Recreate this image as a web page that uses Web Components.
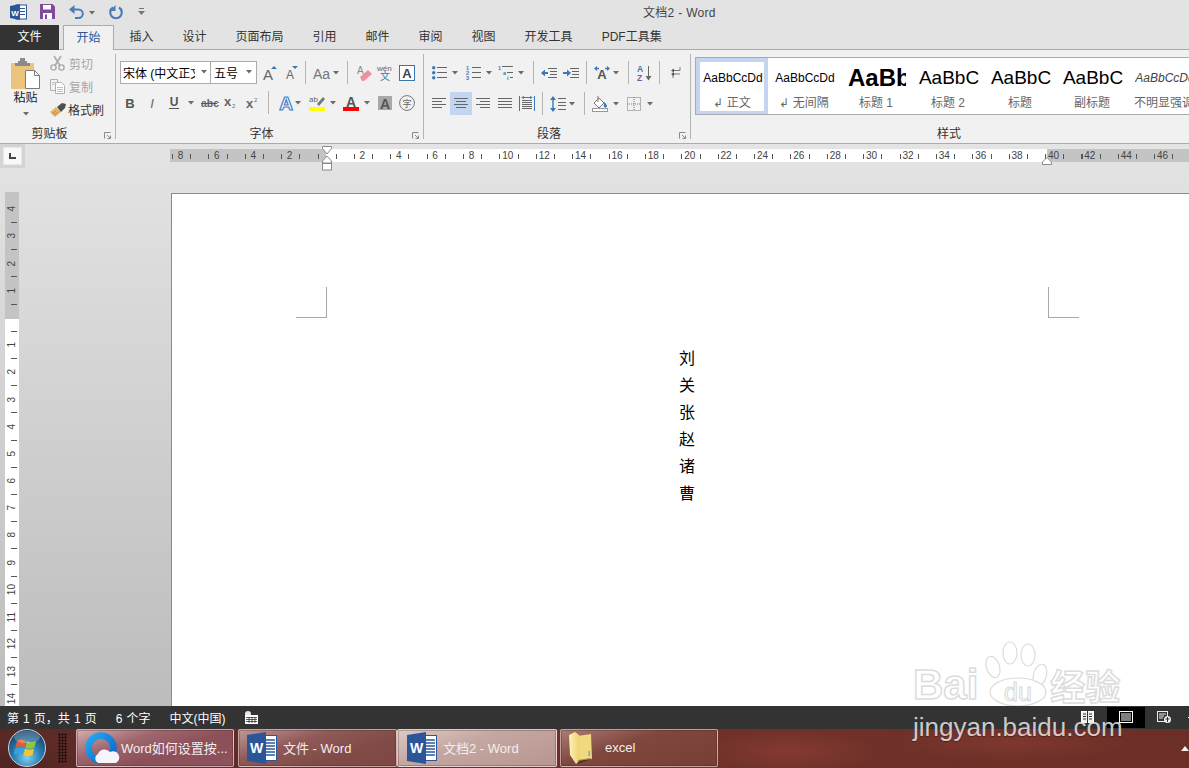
<!DOCTYPE html>
<html lang="zh">
<head>
<meta charset="utf-8">
<title>文档2 - Word</title>
<style>
  html, body { margin: 0; padding: 0; overflow: hidden; background: #fff; }
</style>
</head>
<body>
<word-app></word-app>
<script>
const FONT = "'Liberation Sans','Noto Sans CJK SC',sans-serif";
const T = (x, y, size, fill, str, extra = '') =>
  `<text x="${x}" y="${y}" font-size="${size}" fill="${fill}" font-family="Liberation Sans,Noto Sans CJK SC,sans-serif" ${extra}>${str}</text>`;
const L = (rows, c = '#666') => rows.map(([a, y, b]) => `<path d="M${a} ${y}.5H${b}" stroke="${c}" fill="none"/>`).join('');

// name: [width, height, svg body]
const ICONS = {
  arrow: [6, 4, '<path d="M0 0h6L3 3.5z" fill="#6a6a6a"/>'],
  div: [1, 23, '<path d="M.5 0v23" stroke="#b4b4b4"/>'],
  wordSmall: [17, 16, '<rect x="6" y="1" width="10.5" height="14" fill="#fff" stroke="#2b579a"/><path d="M9 4.500h6M9 7.500h6M9 10.500h6" stroke="#2b579a"/><path d="M0 2l10-2v16l-10-2z" fill="#2b579a"/>' + T(5, 11.5, 8, '#fff', 'W', 'font-weight="bold" text-anchor="middle"')],
  save: [15, 15, '<path d="M0 0h12.500L15 2.500V15H0z" fill="#7e4b9e"/><rect x="3" y="1" width="8" height="4.500" fill="#fff"/><rect x="3" y="9" width="9" height="6" fill="#fff"/><rect x="5" y="10.500" width="2" height="4.500" fill="#7e4b9e"/>'],
  undo: [16, 14, '<path d="M3 4.500h6.500a4.200 4.200 0 0 1 0 8.500H6" fill="none" stroke="#4a7db8" stroke-width="2"/><path d="M5.500 0v9L0 4.500z" fill="#4a7db8"/>'],
  redo: [14, 14, '<path d="M4 2.500a5.800 5.800 0 1 0 6 0" fill="none" stroke="#4a7db8" stroke-width="2.200"/><path d="M6.500 0v6H1z" fill="#4a7db8"/>'],
  custom: [7, 7, '<path d="M1 .5h5" stroke="#777"/><path d="M0 3h7L3.500 7z" fill="#777"/>'],
  paste: [30, 31, '<rect x="0" y="5" width="23" height="26" rx="1" fill="#ebc47f"/><path d="M4 5h15v3H4z" fill="#8a8a8a"/><path d="M7 3h9v3H7z" fill="#8a8a8a"/><path d="M9 0h5v3H9z" fill="#8a8a8a"/><path d="M14.500 12.500h9l5 5v13h-14z" fill="#fff" stroke="#7a7a7a"/><path d="M23.500 12.500v5h5" fill="none" stroke="#7a7a7a"/>'],
  cut: [15, 15, '<circle cx="3.500" cy="11.500" r="2.600" fill="none" stroke="#aaa" stroke-width="1.400"/><circle cx="11.500" cy="11.500" r="2.600" fill="none" stroke="#aaa" stroke-width="1.400"/><path d="M5 9.500L11 0M10 9.500L4 0" stroke="#aaa" stroke-width="1.600"/>'],
  copy: [15, 15, '<path d="M.5.5h7v11h-7z" fill="#f3f3f3" stroke="#b0b0b0"/><path d="M5.500 3.500h6l3 3v8h-9z" fill="#fff" stroke="#b0b0b0"/><path d="M7 8.500h6M7 10.500h6M7 12.500h6M2 3.500h3M2 5.500h2" stroke="#c0c0c0"/>'],
  brush: [17, 15, '<path d="M0 10l6-5 5 5-6 5z" fill="#e4b468"/><path d="M2 12l4-3M4 13l4-3" stroke="#b98c44"/><path d="M7 5l5-4 4 1-1 4-4 4z" fill="#4e4e4e"/>'],
  launcher: [7, 7, '<path d="M.5 6.500v-6h6" fill="none" stroke="#8a8a8a"/><path d="M3 3l3 3M6.500 3.500v3h-3" fill="none" stroke="#8a8a8a"/>'],
  grow: [14, 14, T(0, 14, 15, '#666', 'A') + '<path d="M8 3l3-3 3 3z" fill="#3b78b5"/>'],
  shrink: [12, 13, T(0, 13, 12, '#666', 'A') + '<path d="M6 0h6L9 3z" fill="#3b78b5"/>'],
  aa: [18, 14, T(0, 13, 14, '#777', 'Aa')],
  eraser: [15, 16, T(0, 9, 10, '#888', 'A') + '<path d="M3 12l8-7 4 4-8 7H5z" fill="#ee8f9f"/>'],
  wen: [16, 17, T(0, 7, 8, '#666', 'wén') + T(3, 16, 10, '#3b78b5', '文')],
  boxA: [16, 16, '<rect x=".5" y=".5" width="15" height="15" fill="#fff" stroke="#3c74ad"/>' + T(8, 13, 13, '#444', 'A', 'text-anchor="middle" font-weight="bold"')],
  bold: [10, 11, T(5, 10.5, 13, '#555', 'B', 'text-anchor="middle" font-weight="bold"')],
  italic: [10, 11, T(5, 10.5, 13, '#666', 'I', 'text-anchor="middle" font-style="italic"')],
  under: [10, 13, T(5, 10, 12, '#555', 'U', 'text-anchor="middle" font-weight="bold"') + '<path d="M0 12.500h10" stroke="#555"/>'],
  abc: [16, 10, T(0, 9, 10.5, '#666', 'abc', 'font-weight="bold"') + '<path d="M0 5.500h16" stroke="#555"/>'],
  sub: [13, 13, T(0, 10, 13, '#666', 'x', 'font-weight="bold"') + T(8, 12, 6, '#3b78b5', '2')],
  sup: [13, 13, T(0, 12, 13, '#666', 'x', 'font-weight="bold"') + T(8, 6, 6, '#3b78b5', '2')],
  effectA: [18, 16, T(9, 15, 19, '#fff', 'A', 'text-anchor="middle" font-weight="bold" stroke="#3f7fc8" stroke-width="1.200"')],
  hilite: [16, 16, T(0, 7, 8, '#666', 'ab') + '<path d="M8 9l6-7 2 2-6 7z" fill="#777"/><rect y="12" width="16" height="4" fill="#ff0"/>'],
  colorA: [16, 16, T(8, 11.5, 14, '#555', 'A', 'text-anchor="middle" font-weight="bold"') + '<rect y="12" width="16" height="4" fill="#f00"/>'],
  shadeA: [14, 14, '<rect width="14" height="14" fill="#a8a8a8"/>' + T(7, 12.5, 14, '#555', 'A', 'text-anchor="middle" font-weight="bold"')],
  circle: [16, 16, '<circle cx="8" cy="8" r="7.400" fill="none" stroke="#777"/>' + T(8, 12, 9, '#666', '字', 'text-anchor="middle"')],
  bullets: [15, 14, '<path d="M5 1.500h10M5 6.500h10M5 11.500h10" stroke="#666"/><circle cx="1.700" cy="1.700" r="1.700" fill="#3b78b5"/><circle cx="1.700" cy="6.700" r="1.700" fill="#3b78b5"/><circle cx="1.700" cy="11.700" r="1.700" fill="#3b78b5"/>'],
  numbers: [15, 15, T(0, 4.5, 5.5, '#3b78b5', '1', 'font-weight="bold"') + T(0, 9.7, 5.5, '#3b78b5', '2', 'font-weight="bold"') + T(0, 15, 5.5, '#3b78b5', '3', 'font-weight="bold"') + '<path d="M6 2.500h9M6 7.500h9M6 12.500h9" stroke="#666"/>'],
  multi: [16, 15, T(0, 5, 5.5, '#3b78b5', '1', 'font-weight="bold"') + T(5, 10, 5.5, '#3b78b5', 'a', 'font-weight="bold"') + T(9, 15, 5.5, '#3b78b5', 'i', 'font-weight="bold"') + '<path d="M4 1.500h11M9 7.500h6M12 12.500h3" stroke="#666"/>'],
  dec: [16, 10, '<path d="M7 .5h9M9 3.500h7M9 6.500h7M7 9.500h9" stroke="#666"/><path d="M1 5h6" stroke="#3b78b5" stroke-width="2"/><path d="M4 1.500v7L0 5z" fill="#3b78b5"/>'],
  inc: [16, 10, '<path d="M7 .5h9M9 3.500h7M9 6.500h7M7 9.500h9" stroke="#666"/><path d="M0 5h6" stroke="#3b78b5" stroke-width="2"/><path d="M4 1.500v7L8 5z" fill="#3b78b5"/>'],
  dirA: [16, 13, T(8, 13, 13, '#555', 'A', 'text-anchor="middle" font-weight="bold"') + '<path d="M2 2.500h3M11 2.500h3" stroke="#3b78b5" stroke-width="1.400"/><path d="M3 0v5L0 2.500zM13 0v5l3-2.500z" fill="#3b78b5"/>'],
  sort: [15, 16, T(0, 7, 8.5, '#3b78b5', 'A', 'font-weight="bold"') + T(0, 15.5, 8.5, '#8e4fa8', 'Z', 'font-weight="bold"') + '<path d="M11.500 1v12" stroke="#666"/><path d="M8.500 11h6l-3 4.500z" fill="#666"/>'],
  para: [11, 13, '<path d="M10 1v3.500H3M10 8H3v4" fill="none" stroke="#777"/><path d="M4 2.500v4L1 4.500zM1 8l3-2v4z" fill="#555"/>'],
  aleft: [14, 11, L([[0, 0, 14], [0, 3, 10], [0, 6, 14], [0, 9, 10]])],
  aright: [14, 11, L([[0, 0, 14], [4, 3, 14], [0, 6, 14], [4, 9, 14]])],
  ajust: [14, 11, L([[0, 0, 14], [0, 3, 14], [0, 6, 14], [0, 9, 14]])],
  acenterOn: [22, 23, '<rect width="22" height="23" fill="#c3d5f1"/>' + L([[4, 6, 18], [6, 9, 16], [4, 12, 18], [6, 15, 16]])],
  adist: [16, 15, '<path d="M.5 0v15M15.500 0v15" stroke="#3b78b5"/><path d="M3 1.500h10" stroke="#3b78b5"/><path d="M5 0v3L2 1.500zM11 0v3l3-1.500z" fill="#3b78b5"/>' + L([[3, 4, 13], [3, 6, 13], [3, 8, 13], [3, 10, 13], [3, 12, 13]])],
  lines: [16, 16, '<path d="M3 2v12" stroke="#3b78b5" stroke-width="1.400"/><path d="M0 4l3-4 3 4zM0 12l3 4 3-4z" fill="#3b78b5"/>' + L([[8, 2, 16], [8, 6, 16], [8, 9, 16], [8, 13, 16]])],
  bucket: [16, 16, '<path d="M2 7l5-5 5 5-5 5z" fill="#fff" stroke="#777"/><path d="M6 0v6" stroke="#777"/><path d="M12 6c2 2 3 3 3 4a1.600 1.600 0 0 1-3.200 0z" fill="#3b78b5"/><rect x=".5" y="12.500" width="15" height="3" fill="#fff" stroke="#999"/>'],
  borders: [14, 14, '<rect x=".5" y=".5" width="13" height="13" fill="none" stroke="#777" stroke-dasharray="1 1"/><path d="M7 0v14M0 7h14" stroke="#777" stroke-dasharray="1 1"/>'],
  macro: [13, 13, '<circle cx="3" cy="3" r="3" fill="#e8e8e8"/><rect y="4" width="13" height="9" fill="#fff"/><path d="M1 6.500h11M1 8.500h11M1 10.500h11M4 6v6M7 6v6M10 6v6" stroke="#333" stroke-width=".8"/>'],
  read: [13, 12, '<rect x=".5" y=".5" width="12" height="11" fill="#eee" stroke="#fff"/><path d="M6.500 0v12" stroke="#333"/><path d="M2 3h3M8 3h3M2 5.500h3M8 5.500h3M2 8h3M8 8h3" stroke="#333"/>'],
  print: [14, 12, '<rect x=".5" y=".5" width="13" height="11" fill="none" stroke="#fff"/><path d="M2 3h10M2 5h10M2 7h10M2 9h10" stroke="#fff"/>'],
  web: [14, 12, '<rect x=".5" y=".5" width="10" height="10" fill="#333" stroke="#eee"/><path d="M2 3h7M2 5h5M2 7h4" stroke="#eee"/><circle cx="10.500" cy="8.500" r="3.500" fill="#eee"/><path d="M8.500 8h4M10.500 6v5" stroke="#333"/>'],
  qq: [32, 32, '<defs><linearGradient id="q" x1="0" y1="0" x2="1" y2="1"><stop offset="0" stop-color="#25a8f0"/><stop offset="1" stop-color="#0b62c4"/></linearGradient></defs><circle cx="16" cy="16" r="12.500" fill="none" stroke="url(#q)" stroke-width="6.500"/><path d="M13 31a5 5 0 0 1 0-9 7 7 0 0 1 12-2 5.500 5.500 0 0 1 6 11z" fill="#f4f6fa"/>'],
  wordBig: [30, 32, '<rect x="13" y="3.500" width="16.500" height="25" fill="#fff" stroke="#2b579a"/><path d="M18 8h10M18 11h10M18 14h10M18 17h10M18 20h10M18 23h10" stroke="#2b579a" stroke-width="1.300"/><path d="M0 3l19-3v32L0 29z" fill="#2b579a"/>' + T(9.5, 21, 14, '#fff', 'W', 'font-weight="bold" text-anchor="middle"')],
  folder: [24, 32, '<defs><linearGradient id="f" x1="0" y1="0" x2="1" y2="0"><stop offset="0" stop-color="#fdf3b4"/><stop offset="1" stop-color="#eed06a"/></linearGradient></defs><path d="M8 4l14-2 1 25-14 2z" fill="#f0d97f"/><path d="M0 3l6-3 4 3 1 26-4 3-6-9z" fill="url(#f)"/><rect x="19.500" y="19" width="1.500" height="5" fill="#6aa8d8"/><path d="M8 32l15-5-2-1-12 2z" fill="rgba(0,0,0,.35)"/>'],
  orb: [38, 38, '<defs><radialGradient id="o" cx=".5" cy=".75" r=".8"><stop offset="0" stop-color="#7fd0f0"/><stop offset=".45" stop-color="#2a7fb4"/><stop offset="1" stop-color="#0f2f55"/></radialGradient></defs><circle cx="19" cy="19" r="18.500" fill="url(#o)" stroke="#c8d6de"/><path d="M9 12q4-3 9 0l-1.500 6.500q-4.500-2.500-9 0z" fill="#ea5a30"/><path d="M19 12q4 2.500 9 0l-1.500 6.500q-5 2.500-9 0z" fill="#8cc63f"/><path d="M7 19.500q4.500-2.500 9 0L14.500 26q-4.500-2.500-9 0z" fill="#36a3e0"/><path d="M17 19.500q4.500 2.500 9 0L24.500 26q-5 2.500-9 0z" fill="#f7c530"/><ellipse cx="19" cy="8" rx="13" ry="6.500" fill="rgba(255,255,255,.22)"/>']
};

class WordIcon extends HTMLElement {
  connectedCallback() {
    const [w, h, body] = ICONS[this.getAttribute('name')];
    this.attachShadow({ mode: 'open' });
    this.shadowRoot.innerHTML = `
      <style>:host { display: block; flex: none; width: ${w}px; height: ${h}px; line-height: 0; } svg { overflow: visible; }</style>
      <svg width="${w}" height="${h}" viewBox="0 0 ${w} ${h}">${body}</svg>`;
  }
}
customElements.define('word-icon', WordIcon);

// items: "name:margin name:margin", laid out left to right after any slotted content
class RbRow extends HTMLElement {
  connectedCallback() {
    const items = (this.getAttribute('items') || '').split(/\s+/).filter(Boolean).map(s => {
      const [n, m] = s.split(':');
      return `<word-icon name="${n}" style="margin-left:${m || 0}px"></word-icon>`;
    }).join('');
    this.attachShadow({ mode: 'open' });
    this.shadowRoot.innerHTML = `
      <style>:host { display: flex; align-items: center; height: 23px; }</style>
      <slot></slot>${items}`;
  }
}
customElements.define('rb-row', RbRow);

class RbGroup extends HTMLElement {
  connectedCallback() {
    const launcher = this.hasAttribute('launcher') ? '<word-icon class="launch" name="launcher"></word-icon>' : '';
    this.attachShadow({ mode: 'open' });
    this.shadowRoot.innerHTML = `
      <style>
        :host { display: flex; flex-direction: column; flex: none; box-sizing: border-box; height: 85px; margin-top: 4px; border-right: 1px solid #b4b4b4; position: relative; }
        .body { flex: 1; min-height: 0; }
        .foot { height: 17px; line-height: 17px; margin-bottom: -4px; text-align: center; font-size: 12px; color: #333; padding-right: var(--foot-right, 16px); padding-left: var(--foot-left, 0); }
        .launch { position: absolute; right: 4px; bottom: 0; }
      </style>
      <div class="body"><slot></slot></div>
      <div class="foot">${this.getAttribute('label')}</div>
      ${launcher}`;
  }
}
customElements.define('rb-group', RbGroup);

class RbStyle extends HTMLElement {
  connectedCallback() {
    this.attachShadow({ mode: 'open' });
    this.shadowRoot.innerHTML = `
      <style>
        :host { display: flex; flex-direction: column; align-items: center; flex: none; width: 72px; height: 57px; overflow: hidden; }
        :host([selected]) { box-shadow: inset 0 0 0 4px #c3d5f1; }
        .pv { display: flex; align-items: center; justify-content: center; box-sizing: border-box; width: 60px; height: 38px; padding-top: 2px; margin-left: 2px; overflow: hidden; white-space: nowrap; color: #000; }
        .cap { font-size: 12px; line-height: 15px; color: #666; white-space: nowrap; }
      </style>
      <div class="pv"><slot></slot></div>
      <div class="cap">${this.getAttribute('label')}</div>`;
  }
}
customElements.define('rb-style', RbStyle);

class WordTitlebar extends HTMLElement {
  connectedCallback() {
    this.attachShadow({ mode: 'open' });
    this.shadowRoot.innerHTML = `
      <style>
        :host { display: flex; align-items: center; height: 25px; box-sizing: border-box; padding: 0 0 2px 10px; background: #e3e3e3; }
        .title { margin-left: 498px; margin-bottom: 1px; font-size: 12px; color: #444; white-space: nowrap; letter-spacing: .3px; }
      </style>
      <word-icon name="wordSmall"></word-icon>
      <word-icon name="save" style="margin-left:13px"></word-icon>
      <word-icon name="undo" style="margin-left:14px"></word-icon>
      <word-icon name="arrow" style="margin-left:4px"></word-icon>
      <word-icon name="redo" style="margin-left:14px"></word-icon>
      <word-icon name="custom" style="margin-left:15px"></word-icon>
      <div class="title">文档2 - Word</div>`;
  }
}
customElements.define('word-titlebar', WordTitlebar);

class WordTabs extends HTMLElement {
  connectedCallback() {
    const names = ['插入', '设计', '页面布局', '引用', '邮件', '审阅', '视图', '开发工具', 'PDF工具集'];
    this.attachShadow({ mode: 'open' });
    this.shadowRoot.innerHTML = `
      <style>
        :host { display: flex; height: 25px; background: #e3e3e3; box-sizing: border-box; border-bottom: 1px solid #ababab; font-size: 12px; color: #333; }
        .file { width: 59px; height: 25px; line-height: 24px; text-align: center; background: #333; color: #fff; }
        .home { box-sizing: border-box; width: 51px; height: 25px; margin-left: 4px; line-height: 24px; text-align: center; background: #f1f1f1; border: 1px solid #ababab; border-bottom: 0; color: #2b579a; }
        .list { display: flex; gap: 29px; margin-left: 15.500px; line-height: 24px; white-space: nowrap; }
      </style>
      <div class="file">文件</div>
      <div class="home">开始</div>
      <div class="list">${names.map(n => `<span>${n}</span>`).join('')}</div>`;
  }
}
customElements.define('word-tabs', WordTabs);

class WordRibbon extends HTMLElement {
  connectedCallback() {
    this.attachShadow({ mode: 'open' });
    this.shadowRoot.innerHTML = `
      <style>
        :host { display: flex; height: 94px; box-sizing: border-box; background: #f1f1f1; border-bottom: 1px solid #ababab; font-size: 12px; color: #333; overflow: hidden; }
        .clip { display: flex; }
        .paste { display: flex; flex-direction: column; align-items: center; width: 51px; padding-top: 4px; }
        .paste span { line-height: 17px; color: #222; margin-top: 1px; }
        .paste .a { margin-top: 5px; }
        .small { margin-top: -2.500px; margin-left: -1px; }
        .small span { margin-left: 4px; white-space: nowrap; color: #a6a6a6; }
        .small .on { color: #333; }
        .r1 { margin: 7px 0 0 4px; }
        .r2 { margin: 7px 0 0 4px; }
        .p1 { margin-top: 7px; }
        .p2 { margin-top: 8px; }
        .sel { display: flex; align-items: center; box-sizing: border-box; height: 23px; padding-bottom: 1px; background: #fff; border: 1px solid #ababab; color: #000; white-space: nowrap; overflow: hidden; }
        .sel b { font-weight: normal; overflow: hidden; }
        .sel word-icon { margin-left: auto; }
        .font { width: 91px; padding: 0 3px 1px 2px; }
        .font b { width: 72px; }
        .size { width: 47px; margin-left: -1px; padding: 0 4px 1px 3px; }
        .gallery { display: flex; margin: 3px 0 0 4px; height: 58px; box-sizing: border-box; background: #fff; border: 1px solid #ababab; border-right: 0; overflow: hidden; }
        .styles { flex: 1; border-right: 0; min-width: 0; --foot-right: 0; --foot-left: 18px; }
        .aa { font: 12px 'Liberation Sans', sans-serif; }
        .h2 { font: 19px 'Liberation Sans', sans-serif; }
      </style>
      <rb-group label="剪贴板" launcher style="width:116px">
        <div class="clip">
          <div class="paste">
            <word-icon name="paste"></word-icon>
            <span>粘贴</span>
            <word-icon class="a" name="arrow"></word-icon>
          </div>
          <div class="small">
            <rb-row items=""><word-icon name="cut"></word-icon><span>剪切</span></rb-row>
            <rb-row items=""><word-icon name="copy"></word-icon><span>复制</span></rb-row>
            <rb-row items=""><word-icon name="brush"></word-icon><span class="on" style="margin-left:1px">格式刷</span></rb-row>
          </div>
        </div>
      </rb-group>
      <rb-group label="字体" launcher style="width:308px">
        <rb-row class="r1" items="grow:6 shrink:9 div:7 aa:7 arrow:2 div:8 eraser:9 wen:5 boxA:6">
          <div class="sel font"><b>宋体 (中文正文)</b><word-icon name="arrow"></word-icon></div>
          <div class="sel size"><b>五号</b><word-icon name="arrow"></word-icon></div>
        </rb-row>
        <rb-row class="r2" items="bold:5 italic:12 under:12 arrow:9 abc:7 sub:7 sup:9 div:9 effectA:8 arrow:0 hilite:8 arrow:5 colorA:7 arrow:5 shadeA:8 circle:7"></rb-row>
      </rb-group>
      <rb-group label="段落" launcher style="width:267px">
        <rb-row class="p1" items="bullets:8 arrow:5 numbers:8 arrow:5 multi:6 arrow:4 div:9 dec:7 inc:6 div:7 dirA:7 arrow:3 div:9 sort:8 div:7 para:10"></rb-row>
        <rb-row class="p2" items="aleft:8 acenterOn:4 aright:4 ajust:8 adist:7 div:7 lines:7 arrow:3 div:9 bucket:7 arrow:5 borders:8 arrow:6"></rb-row>
      </rb-group>
      <rb-group class="styles" label="样式">
        <div class="gallery">
          <rb-style label="↲ 正文" selected><span class="aa">AaBbCcDd</span></rb-style>
          <rb-style label="↲ 无间隔"><span class="aa">AaBbCcDd</span></rb-style>
          <rb-style label="标题 1"><span style="font:bold 24px 'Liberation Sans',sans-serif;display:block;width:58px;overflow:hidden">AaBbC</span></rb-style>
          <rb-style label="标题 2"><span class="h2">AaBbC</span></rb-style>
          <rb-style label="标题"><span class="h2">AaBbC</span></rb-style>
          <rb-style label="副标题"><span class="h2">AaBbC</span></rb-style>
          <rb-style label="不明显强调"><span style="font:italic 12px 'Liberation Sans',sans-serif;color:#444">AaBbCcDd</span></rb-style>
        </div>
      </rb-group>`;
  }
}
customElements.define('word-ribbon', WordRibbon);

class HRuler extends HTMLElement {
  connectedCallback() {
    const nums = [8, 6, 4, 2, ''];
    for (let i = 2; i <= 48; i += 2) nums.push(i);
    this.attachShadow({ mode: 'open' });
    this.shadowRoot.innerHTML = `
      <style>
        :host { display: flex; flex: 1; min-width: 0; height: 13px; position: relative; font: 10px/13px 'Liberation Sans', sans-serif; color: #444;
          background:
            repeating-linear-gradient(90deg, #555 0 1px, transparent 1px 18.190px) 2px 5px / 100% 5px no-repeat,
            linear-gradient(90deg, #c4c4c4 156px, #fff 156px, #fff 877px, #c4c4c4 877px); }
        .strip { display: flex; flex: 1; min-width: 0; overflow: hidden; }
        span { flex: none; width: 36.380px; text-align: center; }
        span:first-child { margin-left: -7.700px; }
        .indent { position: absolute; left: 152px; top: -3px; }
        .right { position: absolute; left: 872px; top: 8px; }
      </style>
      <div class="strip">${nums.map(n => `<span>${n}</span>`).join('')}</div>
      <svg class="indent" width="10" height="25" viewBox="0 0 10 25">
        <path d="M.5.5h9v2L5 8 .5 2.500z" fill="#fff" stroke="#8a8a8a"/>
        <path d="M5 10l4.500 5v2h-9v-2z" fill="#fff" stroke="#8a8a8a"/>
        <rect x=".5" y="17.500" width="9" height="6.500" fill="#fff" stroke="#8a8a8a"/>
      </svg>
      <svg class="right" width="10" height="8" viewBox="0 0 10 8"><path d="M5 .5l4.500 4.500v2.500h-9V5z" fill="#fff" stroke="#8a8a8a"/></svg>`;
  }
}
customElements.define('h-ruler', HRuler);

class VRuler extends HTMLElement {
  connectedCallback() {
    const nums = [4, 3, 2, 1, ''];
    for (let i = 1; i <= 14; i++) nums.push(i);
    this.attachShadow({ mode: 'open' });
    this.shadowRoot.innerHTML = `
      <style>
        :host { display: flex; flex-direction: column; flex: none; width: 14px; margin-left: 5px; overflow: hidden; font: 10px/14px 'Liberation Sans', sans-serif; color: #444;
          background:
            repeating-linear-gradient(180deg, #555 0 1px, transparent 1px 27.200px) 6px 30px / 6px 100% no-repeat,
            linear-gradient(180deg, #c4c4c4 127px, #fff 127px); }
        span { flex: none; height: 27.200px; display: flex; align-items: center; justify-content: center; }
        span:first-of-type { margin-top: 3.400px; }
        b { font-weight: normal; writing-mode: vertical-rl; transform: rotate(180deg); }
      </style>
      ${nums.map(n => `<span><b>${n}</b></span>`).join('')}`;
  }
}
customElements.define('v-ruler', VRuler);

class WordPage extends HTMLElement {
  connectedCallback() {
    this.attachShadow({ mode: 'open' });
    this.shadowRoot.innerHTML = `
      <style>
        :host { display: block; flex: 1; min-width: 0; margin: 1px 0 0 152px; box-sizing: border-box; background: #fff; border: solid #8a8a8a; border-width: 1px 0 0 1px; padding: 93px 0 0 124px; overflow: hidden; }
        .crops { display: flex; justify-content: space-between; width: 783px; }
        .crops i { display: block; box-sizing: border-box; width: 31px; height: 31px; border-bottom: 1px solid #a8a8a8; }
        .crops i:first-child { border-right: 1px solid #a8a8a8; }
        .crops i:last-child { border-left: 1px solid #a8a8a8; }
        .text { width: 722px; margin: 27px 0 0 30px; text-align: center; font-size: 16px; line-height: 27.100px; color: #000; }
      </style>
      <div class="crops"><i></i><i></i></div>
      <div class="text"><div>刘</div><div>关</div><div>张</div><div>赵</div><div>诸</div><div>曹</div></div>`;
  }
}
customElements.define('word-page', WordPage);

class WordWorkspace extends HTMLElement {
  connectedCallback() {
    this.attachShadow({ mode: 'open' });
    this.shadowRoot.innerHTML = `
      <style>
        :host { display: flex; flex-direction: column; height: 562px; background: linear-gradient(180deg, #e4e4e4 0, #d6d6d6 200px, #bcbcbc 100%); }
        .top { display: flex; height: 48px; flex: none; }
        .tabsel { flex: none; box-sizing: border-box; width: 25px; height: 24px; padding: 3px; background: #d4d4d4; }
        .tabsel div { box-sizing: border-box; height: 18px; background: #f8f8f8; border: 1px solid #e8e8e8; display: flex; align-items: center; justify-content: center; }
        .tabsel svg { display: block; }
        h-ruler { margin: 5px 0 0 145px; }
        .main { display: flex; flex: 1; min-height: 0; }
      </style>
      <div class="top">
        <div class="tabsel"><div><svg width="7" height="6" viewBox="0 0 7 6"><path d="M1 0v5h6" fill="none" stroke="#444" stroke-width="2"/></svg></div></div>
        <h-ruler></h-ruler>
      </div>
      <div class="main">
        <v-ruler></v-ruler>
        <word-page></word-page>
      </div>`;
  }
}
customElements.define('word-workspace', WordWorkspace);

class WordStatusbar extends HTMLElement {
  connectedCallback() {
    this.attachShadow({ mode: 'open' });
    this.shadowRoot.innerHTML = `
      <style>
        :host { display: flex; align-items: center; height: 23px; box-sizing: border-box; padding: 0 0 1px 7px; background: #333; color: #fff; font-size: 12px; white-space: nowrap; word-spacing: .75px; }
        .view { flex: none; display: flex; align-items: center; justify-content: center; width: 38px; height: 21px; margin-left: 13px; background: #000; }
        .dash { width: 1px; height: 1px; background: #fff; margin-left: 17px; }
        .push { margin-left: auto; }
      </style>
      <span>第 1 页，共 1 页</span>
      <span style="margin-left:19px">6 个字</span>
      <span style="margin-left:19px">中文(中国)</span>
      <word-icon name="macro" style="margin-left:20px"></word-icon>
      <word-icon class="push" name="read"></word-icon>
      <div class="view"><word-icon name="print"></word-icon></div>
      <word-icon name="web" style="margin-left:12px"></word-icon>
      <div class="dash"></div>`;
  }
}
customElements.define('word-statusbar', WordStatusbar);

class TbButton extends HTMLElement {
  connectedCallback() {
    this.attachShadow({ mode: 'open' });
    this.shadowRoot.innerHTML = `
      <style>
        :host { display: flex; align-items: center; flex: none; box-sizing: border-box; height: 38px; border: 1px solid rgba(255,235,235,.55); border-radius: 2px; box-shadow: inset 0 0 0 1px rgba(60,20,20,.25); color: #f4eeee; font: 13px 'Liberation Sans','Noto Sans CJK SC',sans-serif; white-space: nowrap; overflow: hidden; }
        .ic { flex: none; width: 36px; display: flex; align-items: center; }
        .tx { padding-bottom: 2px; }
      </style>
      <div class="ic"><slot name="icon"></slot></div><div class="tx"><slot></slot></div>`;
  }
}
customElements.define('tb-button', TbButton);

class WinTaskbar extends HTMLElement {
  connectedCallback() {
    this.attachShadow({ mode: 'open' });
    this.shadowRoot.innerHTML = `
      <style>
        :host { display: flex; flex: 1; min-height: 0; box-sizing: border-box; padding-left: 8px; overflow: hidden;
          background:
            radial-gradient(ellipse 90px 22px at 790px 22px, #843a30, transparent),
            radial-gradient(ellipse 120px 18px at 1010px 14px, #7f382e, transparent),
            radial-gradient(ellipse 100px 26px at 40px 10px, #5f2b28, transparent),
            linear-gradient(90deg, #4f2422 0, #5a2a26 76px, #6f3129 700px, #6c2f28 100%); }
        .orb { flex: none; }
        .grip { flex: none; width: 9px; height: 30px; margin: 4px 9px 0 12px; background: radial-gradient(circle, #2b1311 1px, transparent 1.300px) 0 0 / 3px 3px; }
        .b1 { width: 158px; padding-left: 8px; background: linear-gradient(162deg, #cfaeb0 0, #a0666e 32%, #8b5059 60%, #8d525b 100%); }
        .b2 { width: 159px; margin-left: 4px; padding-left: 8px; background: linear-gradient(162deg, #bf9896 0, #905a59 35%, #814b47 65%, #7e4744 100%); }
        .b3 { width: 160px; padding-left: 9px; background: linear-gradient(162deg, #dccbc7 0, #c4a7a1 40%, #b8968f 100%); }
        .b4 { width: 158px; margin-left: 3px; padding-left: 8px; background: linear-gradient(162deg, #ad7b76 0, #7f473e 40%, #763e34 100%); }
        .tray { margin: 17px 0 0 auto; width: 0; height: 0; border: 4px solid transparent; border-top: 0; border-bottom: 5px solid #f0f0f0; }
      </style>
      <word-icon class="orb" name="orb"></word-icon>
      <div class="grip"></div>
      <tb-button class="b1"><word-icon slot="icon" name="qq"></word-icon>Word如何设置按...</tb-button>
      <tb-button class="b2"><word-icon slot="icon" name="wordBig"></word-icon>文件 - Word</tb-button>
      <tb-button class="b3"><word-icon slot="icon" name="wordBig"></word-icon>文档2 - Word</tb-button>
      <tb-button class="b4"><word-icon slot="icon" name="folder"></word-icon>excel</tb-button>
      <div class="tray"></div>`;
  }
}
customElements.define('win-taskbar', WinTaskbar);

class BaiduWatermark extends HTMLElement {
  connectedCallback() {
    this.attachShadow({ mode: 'open' });
    this.shadowRoot.innerHTML = `
      <style>
        :host { position: absolute; left: 913px; top: 640px; width: 220px; pointer-events: none; display: flex; flex-direction: column; }
        .top { display: flex; align-items: flex-end; height: 66px; color: rgba(255,255,255,.9); -webkit-text-stroke: 1.500px #dcdcdc; }
        .bai { font: bold 42px/42px 'Liberation Sans', sans-serif; }
        svg { flex: none; margin-left: 2px; }
        .jy { font: bold 35px/42px 'Noto Sans CJK SC', sans-serif; }
        .url { font: 26px/30px 'Liberation Sans', sans-serif; margin-top: 6px; color: rgba(238,232,232,.85); text-shadow: 0 1px 1px rgba(0,0,0,.35); }
      </style>
      <div class="top">
        <span class="bai">Bai</span>
        <svg width="70" height="66" viewBox="0 0 70 66" fill="#fff" stroke="#dcdcdc" stroke-width="1.200">
          <ellipse cx="13" cy="27" rx="6.500" ry="11" transform="rotate(-18 13 27)"/>
          <ellipse cx="30" cy="13" rx="7" ry="11"/>
          <ellipse cx="48" cy="15" rx="7" ry="11"/>
          <ellipse cx="60" cy="35" rx="6.500" ry="11" transform="rotate(15 60 35)"/>
          <ellipse cx="38" cy="52" rx="28" ry="14"/>
          <text x="38" y="61" font-size="25" text-anchor="middle" font-family="Liberation Sans,sans-serif" fill="#fff" stroke="#d8d8d8" stroke-width="1">du</text>
        </svg>
        <span class="jy">经验</span>
      </div>
      <div class="url">jingyan.baidu.com</div>`;
  }
}
customElements.define('baidu-watermark', BaiduWatermark);

class WordApp extends HTMLElement {
  connectedCallback() {
    this.attachShadow({ mode: 'open' });
    this.shadowRoot.innerHTML = `
      <style>
        :host { display: flex; flex-direction: column; position: relative; width: 1189px; height: 768px; overflow: hidden; font-family: ${FONT}; }
      </style>
      <word-titlebar></word-titlebar>
      <word-tabs></word-tabs>
      <word-ribbon></word-ribbon>
      <word-workspace></word-workspace>
      <word-statusbar></word-statusbar>
      <win-taskbar></win-taskbar>
      <baidu-watermark></baidu-watermark>`;
  }
}
customElements.define('word-app', WordApp);
</script>
</body>
</html>
